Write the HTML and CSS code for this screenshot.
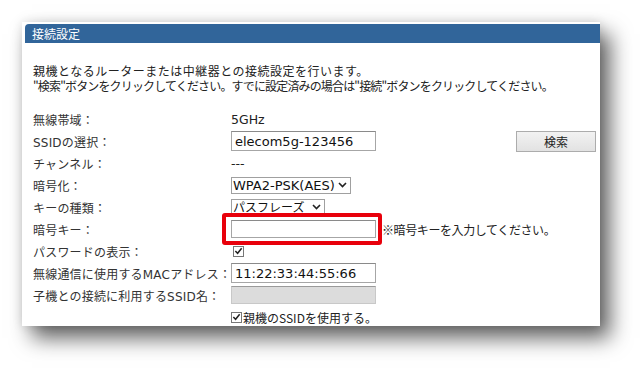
FILE: index.html
```html
<!DOCTYPE html>
<html lang="ja">
<head>
    <meta charset="UTF-8">
    <title>接続設定</title>
    <link rel="stylesheet" href="styles.css">
</head>
<body>
    <div class="page">
        <div class="panel">
            <div class="panel-title">接続設定</div>

            <p class="desc">
                <span class="desc-line">親機となるルーターまたは中継器との接続設定を行います。</span>
                <span class="desc-line desc-tight">"検索"ボタンをクリックしてください。すでに設定済みの場合は"接続"ボタンをクリックしてください。</span>
            </p>

            <div class="form">
                <div class="row">
                    <span class="label">無線帯域：</span>
                    <span class="value">5GHz</span>
                </div>
                <div class="row">
                    <span class="label">SSIDの選択：</span>
                    <div class="value value-split">
                        <span class="field">elecom5g-123456</span>
                        <button class="btn">検索</button>
                    </div>
                </div>
                <div class="row">
                    <span class="label">チャンネル：</span>
                    <span class="value">---</span>
                </div>
                <div class="row">
                    <span class="label">暗号化：</span>
                    <div class="value">
                        <span class="select select-wide">WPA2-PSK(AES)
                            <svg class="chev" width="9" height="6" viewBox="0 0 9 6"><path d="M1 1 L4.5 4.5 L8 1" fill="none" stroke="#222" stroke-width="1.6"/></svg>
                        </span>
                    </div>
                </div>
                <div class="row">
                    <span class="label">キーの種類：</span>
                    <div class="value">
                        <span class="select select-narrow">パスフレーズ
                            <svg class="chev" width="9" height="6" viewBox="0 0 9 6"><path d="M1 1 L4.5 4.5 L8 1" fill="none" stroke="#222" stroke-width="1.6"/></svg>
                        </span>
                    </div>
                </div>
                <div class="row">
                    <span class="label">暗号キー：</span>
                    <div class="value value-note">
                        <span class="field field-key">
                            <span class="highlight"></span>
                        </span>
                        <span class="note">※暗号キーを入力してください。</span>
                    </div>
                </div>
                <div class="row">
                    <span class="label">パスワードの表示：</span>
                    <div class="value">
                        <span class="check">
                            <svg width="10" height="10" viewBox="0 0 10 10"><path d="M1.5 5 L4 7.5 L8.5 2" fill="none" stroke="#222" stroke-width="1.7"/></svg>
                        </span>
                    </div>
                </div>
                <div class="row">
                    <span class="label">無線通信に使用するMACアドレス：</span>
                    <div class="value">
                        <span class="field">11:22:33:44:55:66</span>
                    </div>
                </div>
                <div class="row">
                    <span class="label">子機との接続に利用するSSID名：</span>
                    <div class="value">
                        <span class="field field-disabled"></span>
                    </div>
                </div>
                <div class="row">
                    <span class="label"></span>
                    <div class="value value-check">
                        <span class="check">
                            <svg width="10" height="10" viewBox="0 0 10 10"><path d="M1.5 5 L4 7.5 L8.5 2" fill="none" stroke="#222" stroke-width="1.7"/></svg>
                        </span>
                        <span>親機のSSIDを使用する。</span>
                    </div>
                </div>
            </div>
        </div>
    </div>
</body>
</html>
```

FILE: styles.css
```css
html, body {
    margin: 0;
    height: 100%;
}

body {
    background: #fff;
    color: #222;
    font-family: "DejaVu Sans", "Noto Sans CJK JP", sans-serif;
    font-size: 12px;
}

.page {
    min-height: 369px;
    padding: 22px 0 0 22px;
    box-sizing: border-box;
}

.panel {
    width: 578px;
    height: 304px;
    padding: 2px 0 0 3px;
    box-sizing: border-box;
    background: #fff;
    box-shadow: 10px 12px 20px rgba(0, 0, 0, 0.62), 0 0 10px rgba(0, 0, 0, 0.12);
}

.panel-title {
    height: 19px;
    line-height: 19px;
    padding-left: 7px;
    background: #31659a;
    color: #fff;
    border-radius: 4px 0 0 0;
    font-family: "Noto Sans CJK JP", sans-serif;
    font-size: 12px;
}

.desc {
    margin: 20px 0 0 8px;
    font-family: "Noto Sans CJK JP", sans-serif;
}

.desc-line {
    display: block;
    height: 15px;
    line-height: 15px;
    font-size: 12px;
    letter-spacing: 0.5px;
    white-space: nowrap;
}

.desc-tight {
    letter-spacing: -0.85px;
}

.form {
    margin: 15px 0 0 8px;
}

.row {
    display: grid;
    grid-template-columns: 198px 1fr;
    align-items: center;
    height: 22px;
}

.label {
    white-space: nowrap;
    color: #333;
    letter-spacing: 0.2px;
}

.value {
    display: flex;
    align-items: center;
    font-size: 12.5px;
}

.value-split {
    justify-content: space-between;
    padding-right: 4px;
}

.field {
    display: flex;
    align-items: center;
    width: 145px;
    height: 20px;
    box-sizing: border-box;
    padding: 0 3px;
    border: 1px solid #a6a6a6;
    border-top-color: #8a8a8a;
    background: #fff;
    font-size: 13px;
    color: #111;
}

.field-key {
    position: relative;
    height: 18px;
}

.highlight {
    position: absolute;
    left: -10px;
    right: -7px;
    top: -8px;
    bottom: -8px;
    border: 4px solid #e8000b;
    border-radius: 3px;
}

.field-disabled {
    height: 18px;
    background: #dcdcdc;
    border-color: #c8c8c8;
    border-top-color: #9a9a9a;
}

.note {
    margin-left: 6px;
    font-family: "Noto Sans CJK JP", sans-serif;
    font-size: 12px;
    letter-spacing: -0.4px;
}

.btn {
    width: 80px;
    height: 21px;
    border: 1px solid #acacac;
    background: linear-gradient(#f2f2f2, #e2e2e2);
    font-family: "Noto Sans CJK JP", sans-serif;
    font-size: 12px;
    color: #222;
    padding: 0;
}

.select {
    display: flex;
    align-items: center;
    justify-content: space-between;
    height: 17px;
    line-height: 15px;
    box-sizing: border-box;
    padding: 0 3px 0 1px;
    border: 1px solid #a0a0a0;
    background: #fff;
    font-size: 13px;
    color: #111;
    overflow: hidden;
}

.select-wide {
    width: 120px;
}

.select-narrow {
    width: 94px;
    height: 16px;
    line-height: 14px;
    font-family: "Noto Sans CJK JP", sans-serif;
    font-size: 12px;
}

.chev {
    flex: none;
}

.check {
    display: inline-flex;
    align-items: center;
    justify-content: center;
    width: 11px;
    height: 11px;
    box-sizing: border-box;
    border: 1px solid #777;
    background: #fff;
    margin-left: 2px;
}

.value-check {
    font-family: "Noto Sans CJK JP", sans-serif;
    font-size: 12px;
}

.value-check .check {
    margin-left: 0;
    margin-right: 1px;
}
```
